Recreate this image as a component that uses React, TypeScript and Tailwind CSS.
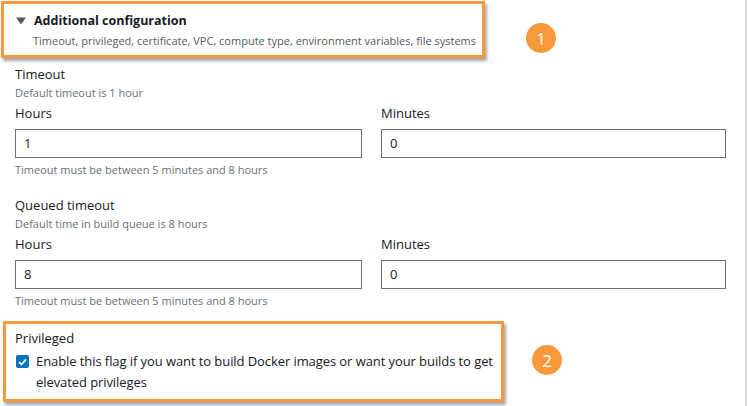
import React from 'react';

const textFont = { fontFamily: '"Open Sans", "Liberation Sans", sans-serif' };

function Badge({ n, className }: { n: number; className: string }) {
  return (
    <div
      className={`absolute w-[30px] h-[30px] rounded-full bg-[#f8993c] flex items-center justify-center text-white text-[17px] leading-none ${className}`}
    >
      {n}
    </div>
  );
}

function NumberField({ value }: { value: string }) {
  return (
    <div className="h-[29px] border border-[#687078] bg-white flex items-center px-[8px] text-[13px] text-[#16191f]">
      {value}
    </div>
  );
}

function TimeGroup({
  title,
  description,
  hours,
  minutes,
  topGap,
}: {
  title: string;
  description: string;
  hours: string;
  minutes: string;
  topGap: string;
}) {
  return (
    <div className={topGap}>
      <div className="text-[13px] leading-[20px] text-[#16191f]">{title}</div>
      <div className="mt-[1px] text-[11px] leading-[16px] text-[#687078]">{description}</div>
      <div className="mt-[2px] grid grid-cols-[347px_345px] gap-x-[19px]">
        <div>
          <div className="text-[13px] leading-[20px] text-[#16191f]">Hours</div>
          <div className="mt-[6px]">
            <NumberField value={hours} />
          </div>
          <div className="mt-[4px] text-[11px] leading-[16px] text-[#687078]">
            Timeout must be between 5 minutes and 8 hours
          </div>
        </div>
        <div>
          <div className="text-[13px] leading-[20px] text-[#16191f]">Minutes</div>
          <div className="mt-[6px]">
            <NumberField value={minutes} />
          </div>
        </div>
      </div>
    </div>
  );
}

export default function App() {
  return (
    <div className="relative w-[748px] h-[406px] bg-white overflow-hidden" style={textFont}>
      <div className="w-[747px] h-full border-r-2 border-[#d5dbdb] pl-[15px]">
        {/* Header */}
        <div className="pt-[12px]">
          <div className="flex items-center gap-[8px] pl-[1px]">
            <svg width="10" height="8" viewBox="0 0 10 8" className="shrink-0">
              <path d="M0 0.5 L10 0.5 L5 7.5 Z" fill="#545b64" />
            </svg>
            <span className="text-[12.5px] leading-[18px] font-bold text-[#16191f]">Additional configuration</span>
          </div>
          <div className="mt-[3px] pl-[18px] text-[11px] leading-[16px] text-[#545b64]">
            Timeout, privileged, certificate, VPC, compute type, environment variables, file systems
          </div>
        </div>

        <TimeGroup
          title="Timeout"
          description="Default timeout is 1 hour"
          hours="1"
          minutes="0"
          topGap="mt-[15px]"
        />
        <TimeGroup
          title="Queued timeout"
          description="Default time in build queue is 8 hours"
          hours="8"
          minutes="0"
          topGap="mt-[17px]"
        />

        {/* Privileged */}
        <div className="mt-[19px]">
          <div className="text-[13px] leading-[20px] text-[#16191f]">Privileged</div>
          <div className="mt-[3px] flex items-start gap-[7px] pl-[1px]">
            <div className="mt-[4px] w-[13px] h-[13px] rounded-[2px] bg-[#0073bb] flex items-center justify-center shrink-0">
              <svg width="9" height="8" viewBox="0 0 9 8">
                <path d="M1 4.2 L3.4 6.5 L8 1.3" fill="none" stroke="white" strokeWidth="1.8" />
              </svg>
            </div>
            <div className="w-[470px] text-[13px] leading-[21px] tracking-[-0.08px] text-[#16191f]">
              Enable this flag if you want to build Docker images or want your builds to get elevated privileges
            </div>
          </div>
        </div>
      </div>

      {/* Annotation callouts */}
      <div className="absolute left-[1px] top-[1px] w-[484px] h-[57px] border-[3px] border-[#f8993c] shadow-[2px_3px_3px_rgba(0,0,0,0.35)]" />
      <div className="absolute left-[3px] top-[321px] w-[501px] h-[81px] border-[3px] border-[#f8993c] shadow-[2px_3px_3px_rgba(0,0,0,0.35)]" />
      <Badge n={1} className="left-[526px] top-[23px]" />
      <Badge n={2} className="left-[532px] top-[345px]" />
    </div>
  );
}
